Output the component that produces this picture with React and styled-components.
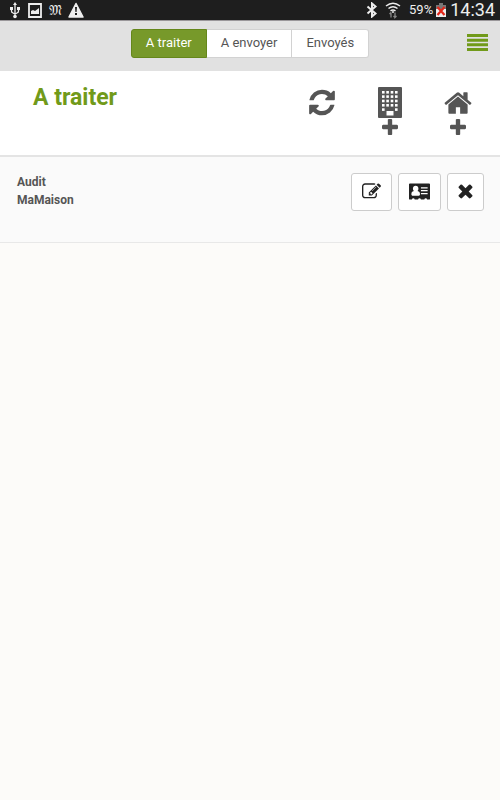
import React, { useState } from "react";
import styled, { createGlobalStyle } from "styled-components";

const GlobalStyle = createGlobalStyle`
    * {
        box-sizing: border-box;
    }

    body {
        margin: 0;
        background-color: #fcfbf9;
        color: #555;
        font-family: Roboto, "Liberation Sans", sans-serif;
        font-size: 13px;
    }

    button {
        font-family: inherit;
        cursor: pointer;
    }

    svg {
        display: block;
    }
`;

const StatusBar = styled.div`
    display: flex;
    align-items: center;
    justify-content: space-between;
    height: 20px;
    padding: 0 5px 0 8px;
    background-color: #1e1e1e;
    color: #eee;
`;

const StatusGroup = styled.div`
    display: flex;
    align-items: center;
    gap: ${(props) => props.$gap}px;
`;

const StatusLetter = styled.span`
    width: 14px;
    text-align: center;
    font-family: "DejaVu Serif", serif;
    font-size: 14px;
    line-height: 20px;
`;

const Percent = styled.span`
    margin-left: 6px;
    font-size: 13px;
    line-height: 20px;
`;

const Clock = styled.span`
    margin-left: 1px;
    font-size: 18px;
    line-height: 20px;
`;

const NavBar = styled.nav`
    display: grid;
    grid-template-columns: 1fr auto 1fr;
    align-items: center;
    height: 51px;
    padding: 0 12px;
    border-top: 1px solid #9a979a;
    background-color: #e1e1e1;
`;

const TabGroup = styled.div`
    display: flex;
    grid-column: 2;
    margin-bottom: 6px;
`;

const Tab = styled.button`
    height: 29px;
    padding: 0 14px;
    border: 1px solid ${(props) => (props.$active ? "#65871b" : "#d2d2d2")};
    background-color: ${(props) => (props.$active ? "#77992a" : "#fff")};
    color: ${(props) => (props.$active ? "#fff" : "#555")};
    font-size: 13px;
    line-height: 18px;

    &:first-child {
        border-radius: 3px 0 0 3px;
    }

    &:last-child {
        border-radius: 0 3px 3px 0;
    }

    & + & {
        border-left: none;
    }
`;

const IconButton = styled.button`
    display: flex;
    flex-direction: column;
    align-items: center;
    gap: 1px;
    justify-self: end;
    padding: 0;
    border: none;
    background: none;
    color: ${(props) => props.$color || "#555"};
`;

const MenuButton = styled(IconButton)`
    margin-bottom: 8px;
`;

const Header = styled.header`
    display: flex;
    justify-content: space-between;
    height: 86px;
    padding: 12px 27px 0 33px;
    border-bottom: 2px solid #e4e4e4;
    background-color: #fff;
`;

const Title = styled.h1`
    margin: 0;
    color: #719a1a;
    font-size: 23px;
    font-weight: 700;
    line-height: 30px;
`;

const HeaderActions = styled.div`
    display: flex;
    align-items: flex-start;
    gap: 41px;
    padding-top: 4px;
`;

const AuditList = styled.ul`
    margin: 0;
    padding: 0;
    list-style: none;
`;

const AuditRow = styled.li`
    display: flex;
    align-items: flex-start;
    justify-content: space-between;
    height: 86px;
    padding: 16px 16px 0 17px;
    border-bottom: 1px solid #e8e8e8;
    background-color: #fafafa;
`;

const AuditName = styled.div`
    font-size: 12px;
    font-weight: 700;
    line-height: 18px;
`;

const RowActions = styled.div`
    display: flex;
    gap: 6px;
`;

const ActionButton = styled.button`
    display: flex;
    align-items: center;
    justify-content: center;
    height: 38px;
    padding: 0 10px 2px;
    border: 1px solid #ccc;
    border-radius: 3px;
    background-color: #fff;
    color: #222;
`;

function Icon(props) {
    const { width, height, viewBox, children } = props;
    return (
        <svg width={width} height={height} viewBox={viewBox} fill="currentColor" aria-hidden="true">
            {children}
        </svg>
    );
}

function UsbIcon() {
    return (
        <Icon width={14} height={18} viewBox="0 0 14 18">
            <path d="M7 1l2 3H5zM2 6h3v3H2zM9 6h3v3H9z" />
            <circle cx="7" cy="15.500" r="1.800" />
            <path d="M7 3v12M3.500 8v2q0 1.500 1.500 2l2 1 2-1q1.500-.5 1.500-2V8" fill="none" stroke="currentColor" strokeWidth="1.300" />
        </Icon>
    );
}

function PictureIcon() {
    return (
        <Icon width={14} height={16} viewBox="0 0 14 16">
            <path d="M1 2h12v13H1z" fill="none" stroke="currentColor" strokeWidth="1.800" />
            <path d="M3 12V9l2-1 2 1 4-3v6z" />
        </Icon>
    );
}

function WarningIcon() {
    return (
        <Icon width={16} height={16} viewBox="0 0 16 16">
            <path d="M8 1.500L15 15H1z" stroke="currentColor" strokeLinejoin="round" strokeWidth="1.500" />
            <path d="M7 5h2l-.4 5H7.400zM7 11h2v2H7z" fill="#1e1e1e" />
        </Icon>
    );
}

function BluetoothIcon() {
    return (
        <Icon width={12} height={16} viewBox="0 0 12 16">
            <path d="M1.500 4.500l8 7L6 14.500v-13l3.500 3-8 7" fill="none" stroke="currentColor" strokeWidth="2" />
        </Icon>
    );
}

function WifiIcon() {
    return (
        <Icon width={16} height={18} viewBox="0 0 16 18">
            <path d="M1 5q7-5.500 14 0M3.500 7.500q4.500-3.500 9 0M5.500 10q2.500-2 5 0" fill="none" stroke="currentColor" strokeWidth="1.500" />
            <circle cx="8" cy="11" r="1" />
            <path d="M6 11.500v5M4.500 13L6 11.500M10 11.500v5l1.500-1.500M8.500 15l1.500 1.500" fill="none" stroke="#888" strokeWidth="1.300" />
        </Icon>
    );
}

function BatteryIcon() {
    return (
        <Icon width={12} height={16} viewBox="0 0 12 16">
            <path d="M1 3h3V1h4v2h3v5H1z" fill="#777" />
            <path d="M1 7h10v8H1z" />
            <path d="M2.500 5l7 8M9.500 5l-7 8" stroke="#e32618" strokeWidth="2.200" />
        </Icon>
    );
}

function MenuIcon() {
    return (
        <Icon width={21} height={17} viewBox="0 0 21 17">
            <path d="M0 0h21v3H0zM0 4.700h21v3H0zM0 9.300h21v3H0zM0 14h21v3H0z" />
        </Icon>
    );
}

function RefreshIcon() {
    return (
        <Icon width={30} height={31} viewBox="0 0 1792 1792">
            <path d="M1639 1056q0 5-1 7-64 268-268 434.500t-478 166.500q-146 0-282.500-55t-243.500-157l-129 129q-19 19-45 19t-45-19-19-45v-448q0-26 19-45t45-19h448q26 0 45 19t19 45-19 45l-137 137q71 66 161 102t187 36q134 0 250-65t186-179q11-17 53-117 8-23 30-23h192q13 0 22.500 9.500t9.500 22.500zm25-800v448q0 26-19 45t-45 19h-448q-26 0-45-19t-19-45 19-45l138-138q-148-137-349-137-134 0-250 65t-186 179q-11 17-53 117-8 23-30 23h-199q-13 0-22.500-9.500t-9.500-22.500v-7q65-268 270-434.500t480-166.500q146 0 284 55.500t245 156.500l130-129q19-19 45-19t45 19 19 45z" />
        </Icon>
    );
}

function BuildingIcon() {
    const columns = [4, 8.300, 12.700, 17];
    const rows = [4, 8.300, 12.700, 17, 21.300];

    return (
        <Icon width={24} height={31} viewBox="0 0 24 31">
            <rect width="24" height="31" rx="1" />
            {rows.map((y) =>
                columns
                    .filter((x) => y < 21 || x < 5 || x > 16)
                    .map((x) => <rect key={x + "-" + y} x={x} y={y} width="2.600" height="2.600" fill="#fff" />)
            )}
            <path d="M8.500 24h7v4.500h-7z" fill="#fff" />
        </Icon>
    );
}

function HomeIcon() {
    return (
        <Icon width={30} height={31} viewBox="0 -64 1792 1856">
            <path d="M1472 992v480q0 26-19 45t-45 19h-384v-384h-256v384h-384q-26 0-45-19t-19-45v-480q0-1 .5-3t.5-3l575-474 575 474q1 2 1 6zm223-69l-62 74q-8 9-21 11h-3q-13 0-21-7l-692-577-692 577q-12 8-24 7-13-2-21-11l-62-74q-8-10-7-23.500t11-21.500l719-599q32-26 76-26t76 26l244 204v-195q0-14 9-23t23-9h192q14 0 23 9t9 23v408l219 182q10 8 11 21.500t-7 23.500z" />
        </Icon>
    );
}

function PlusIcon() {
    return (
        <Icon width={16} height={16} viewBox="192 128 1408 1408">
            <path d="M1600 736v192q0 40-28 68t-68 28h-416v416q0 40-28 68t-68 28h-192q-40 0-68-28t-28-68v-416h-416q-40 0-68-28t-28-68v-192q0-40 28-68t68-28h416v-416q0-40 28-68t68-28h192q40 0 68 28t28 68v416h416q40 0 68 28t28 68z" />
        </Icon>
    );
}

function EditIcon() {
    return (
        <Icon width={19} height={19} viewBox="0 0 1792 1792">
            <path d="M888 1184l116-116-152-152-116 116v56h96v96h56zm440-720q-16-16-33 1l-350 350q-17 17-1 33t33-1l350-350q17-17 1-33zm80 594v190q0 119-84.500 203.500t-203.500 84.500h-832q-119 0-203.500-84.500t-84.500-203.500v-832q0-119 84.500-203.500t203.500-84.500h832q63 0 117 25 15 7 18 23 3 17-9 29l-49 49q-14 14-32 8-23-6-45-6h-832q-66 0-113 47t-47 113v832q0 66 47 113t113 47h832q66 0 113-47t47-113v-126q0-13 9-22l64-64q15-15 35-7t20 29zm-96-738l288 288-672 672h-288v-288zm444 132l-92 92-288-288 92-92q28-28 68-28t68 28l152 152q28 28 28 68t-28 68z" />
        </Icon>
    );
}

function CardIcon() {
    return (
        <Icon width={21} height={17} viewBox="0 0 22 17">
            <path d="M1 0h20q1 0 1 1v15q0 1-1 1h-2q-.3-1.300-1.500-1.300T16 17h-3.500q-.3-1.300-1.500-1.300T9.500 17H6q-.3-1.300-1.500-1.300T3 17H1q-1 0-1-1V1q0-1 1-1z" />
            <path d="M7 2.500c1.800 0 2.900 1.300 2.900 3.100 0 1-.4 1.900-1 2.400 1.900.3 2.600 1.600 2.600 3.400 0 1-.6 1.600-1.500 1.600H4c-.9 0-1.500-.6-1.500-1.600 0-1.800.7-3.100 2.600-3.400-.6-.5-1-1.400-1-2.400 0-1.800 1.100-3.100 2.900-3.100zM12.500 4h7v1.300h-7zM12.500 7h7v1.300h-7zM12.500 10h7v1.300h-7z" fill="#fff" />
        </Icon>
    );
}

function CloseIcon() {
    return (
        <Icon width={15} height={15} viewBox="256 324 1280 1280">
            <path d="M1490 1322q0 40-28 68l-136 136q-28 28-68 28t-68-28l-294-294-294 294q-28 28-68 28t-68-28l-136-136q-28-28-28-68t28-68l294-294-294-294q-28-28-28-68t28-68l136-136q28-28 68-28t68 28l294 294 294-294q28-28 68-28t68 28l136 136q28 28 28 68t-28 68l-294 294 294 294q28 28 28 68z" />
        </Icon>
    );
}

const tabs = ["A traiter", "A envoyer", "Envoyés"];

const audits = [{ id: 1, type: "Audit", name: "MaMaison" }];

function App() {
    const [activeTab, setActiveTab] = useState(tabs[0]);

    return (
        <>
            <GlobalStyle />
            <StatusBar>
                <StatusGroup $gap={6}>
                    <UsbIcon />
                    <PictureIcon />
                    <StatusLetter>𝔐</StatusLetter>
                    <WarningIcon />
                </StatusGroup>
                <StatusGroup $gap={2}>
                    <StatusGroup $gap={7}>
                        <BluetoothIcon />
                        <WifiIcon />
                    </StatusGroup>
                    <Percent>59%</Percent>
                    <BatteryIcon />
                    <Clock>14:34</Clock>
                </StatusGroup>
            </StatusBar>

            <NavBar>
                <TabGroup>
                    {tabs.map((tab) => (
                        <Tab key={tab} type="button" $active={tab === activeTab} onClick={() => setActiveTab(tab)}>
                            {tab}
                        </Tab>
                    ))}
                </TabGroup>
                <MenuButton type="button" aria-label="Menu" $color="#719a1a">
                    <MenuIcon />
                </MenuButton>
            </NavBar>

            <Header>
                <Title>{activeTab}</Title>
                <HeaderActions>
                    <IconButton type="button" aria-label="Actualiser">
                        <RefreshIcon />
                    </IconButton>
                    <IconButton type="button" aria-label="Ajouter un immeuble">
                        <BuildingIcon />
                        <PlusIcon />
                    </IconButton>
                    <IconButton type="button" aria-label="Ajouter une maison">
                        <HomeIcon />
                        <PlusIcon />
                    </IconButton>
                </HeaderActions>
            </Header>

            <AuditList>
                {audits.map((audit) => (
                    <AuditRow key={audit.id}>
                        <AuditName>
                            {audit.type}
                            <br />
                            {audit.name}
                        </AuditName>
                        <RowActions>
                            <ActionButton type="button" aria-label="Modifier">
                                <EditIcon />
                            </ActionButton>
                            <ActionButton type="button" aria-label="Coordonnées">
                                <CardIcon />
                            </ActionButton>
                            <ActionButton type="button" aria-label="Supprimer">
                                <CloseIcon />
                            </ActionButton>
                        </RowActions>
                    </AuditRow>
                ))}
            </AuditList>
        </>
    );
}

export default App;
